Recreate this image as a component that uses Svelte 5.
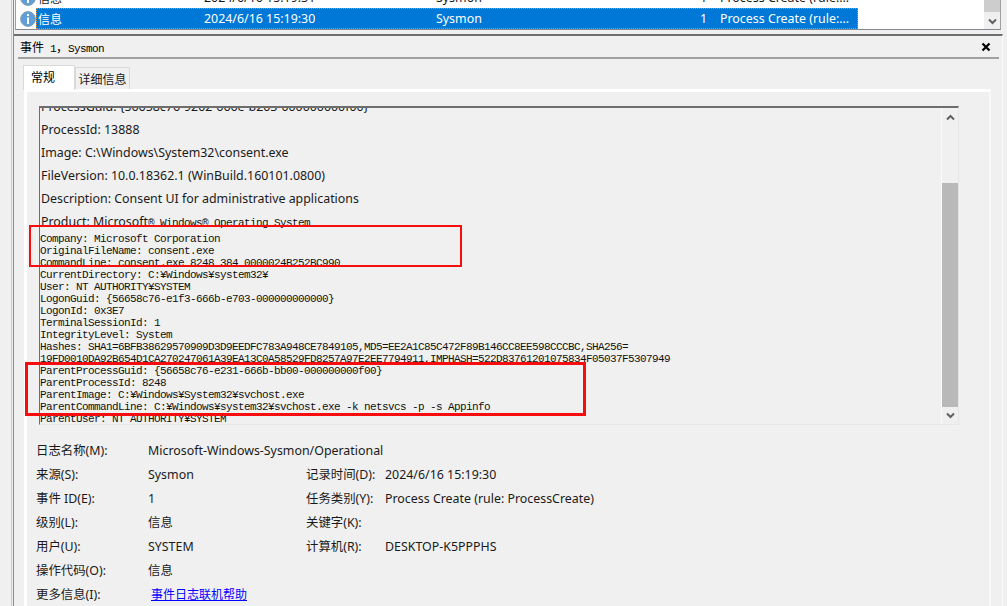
<script>
  const upper = [
    'ProcessGuid: {56658c76-9202-666e-b203-000000000f00}',
    'ProcessId: 13888',
    'Image: C:\\Windows\\System32\\consent.exe',
    'FileVersion: 10.0.18362.1 (WinBuild.160101.0800)',
    'Description: Consent UI for administrative applications'
  ];
  const lower = [
    'Company: Microsoft Corporation',
    'OriginalFileName: consent.exe',
    'CommandLine: consent.exe 8248 384 0000024B252BC990',
    'CurrentDirectory: C:¥Windows¥system32¥',
    'User: NT AUTHORITY¥SYSTEM',
    'LogonGuid: {56658c76-e1f3-666b-e703-000000000000}',
    'LogonId: 0x3E7',
    'TerminalSessionId: 1',
    'IntegrityLevel: System',
    'Hashes: SHA1=6BFB38629570909D3D9EEDFC783A948CE7849105,MD5=EE2A1C85C472F89B146CC8EE598CCCBC,SHA256=',
    '19FD0010DA92B654D1CA270247061A39EA13C0A58529FD8257A97E2EE7794911,IMPHASH=522D83761201075834F05037F5307949',
    'ParentProcessGuid: {56658c76-e231-666b-bb00-000000000f00}',
    'ParentProcessId: 8248',
    'ParentImage: C:¥Windows¥System32¥svchost.exe',
    'ParentCommandLine: C:¥Windows¥system32¥svchost.exe -k netsvcs -p -s Appinfo',
    'ParentUser: NT AUTHORITY¥SYSTEM'
  ];
  const fields = [
    ['日志名称(M):', 'Microsoft-Windows-Sysmon/Operational', '', ''],
    ['来源(S):', 'Sysmon', '记录时间(D):', '2024/6/16 15:19:30'],
    ['事件 ID(E):', '1', '任务类别(Y):', 'Process Create (rule: ProcessCreate)'],
    ['级别(L):', '信息', '关键字(K):', ''],
    ['用户(U):', 'SYSTEM', '计算机(R):', 'DESKTOP-K5PPPHS'],
    ['操作代码(O):', '信息', '', '']
  ];
  const rows = [
    { time: '2024/6/16 15:19:31', selected: false },
    { time: '2024/6/16 15:19:30', selected: true }
  ];
</script>

<div class="screen">
  <div class="list">
    <div class="rows">
      {#each rows as row}
        <div class="row" class:selected={row.selected}>
          <svg class="info" width="16" height="16" viewBox="0 0 16 16">
            <circle cx="8" cy="8" r="7.4" fill="#5f9fd8" stroke="#8a9cae" />
            <rect x="7" y="3" width="2" height="2" fill="#fff" />
            <rect x="7" y="6.5" width="2" height="6.5" fill="#fff" />
          </svg>
          <div class="row-body">
            <span class="cell level">信息</span>
            <span class="cell time">{row.time}</span>
            <span class="cell source">Sysmon</span>
            <span class="cell id">1</span>
            <span class="cell task">Process Create (rule:...</span>
          </div>
        </div>
      {/each}
    </div>
    <div class="list-scroll">
      <div class="list-thumb"></div>
      <svg class="chev" width="9" height="7" viewBox="0 0 9 7"><path d="M1 1.5 4.5 5 8 1.5" fill="none" stroke="#606060" stroke-width="2" /></svg>
    </div>
  </div>

  <div class="details">
    <div class="title">
      <span class="title-text"><span class="cjk">事件</span> 1<span class="cjk">，</span>Sysmon</span>
      <svg width="10" height="10" viewBox="0 0 10 10"><path d="M1.5 1.5 8.5 8.5M8.5 1.5 1.5 8.5" stroke="#000" stroke-width="2.2" /></svg>
    </div>

    <div class="tabs">
      <div class="tab active">常规</div>
      <div class="tab">详细信息</div>
    </div>

    <div class="pane">
      <div class="textbox">
        <div class="text">
          <div class="upper">
            {#each upper as line}
              <div class="prop-line">{line}</div>
            {/each}
            <div class="prop-line product">Product: Microsoft<span class="mono-run">® Windows® Operating System</span></div>
          </div>
          {#each lower as line, i}
            <div class="mono-line" class:cut={i === 2 || i === 10}>{line}</div>
          {/each}
        </div>
        <div class="scroll">
          <svg class="chev" width="9" height="7" viewBox="0 0 9 7"><path d="M1 5.5 4.5 2 8 5.5" fill="none" stroke="#606060" stroke-width="2" /></svg>
          <div class="thumb"></div>
          <svg class="chev" width="9" height="7" viewBox="0 0 9 7"><path d="M1 1.5 4.5 5 8 1.5" fill="none" stroke="#606060" stroke-width="2" /></svg>
        </div>
      </div>

      <div class="fields">
        {#each fields as f}
          <div class="label">{f[0]}</div>
          <div class="value" class:wide={!f[2] && !f[3]}>{f[1]}</div>
          {#if f[2] || f[3]}
            <div class="label">{f[2]}</div>
            <div class="value">{f[3]}</div>
          {/if}
        {/each}
        <div class="label">更多信息(I):</div>
        <div class="value wide"><a class="help" href="#help">事件日志联机帮助</a></div>
      </div>
    </div>
  </div>

  <div class="mark mark-a"></div>
  <div class="mark mark-b"></div>
</div>

<style>
  :global(body) {
    background: #f0f0f0;
  }
  .screen {
    position: relative;
    width: 1007px;
    height: 606px;
    overflow: hidden;
    background: #f0f0f0;
    color: #1a1a1a;
    font-family: "Noto Sans", "Noto Sans CJK SC", sans-serif;
    font-size: 12.4px;
    box-sizing: border-box;
  }
  .screen::before {
    content: "";
    position: absolute;
    left: 11px;
    top: 0;
    width: 1px;
    height: 606px;
    border-left: 1px solid #c8c8c8;
    border-right: 1px solid #8c8c8c;
  }
  .list {
    height: 30px;
    margin: 0 6px 0 15px;
    box-sizing: border-box;
    display: flex;
    background: #fff;
    border-left: 1px solid #a0a0a0;
    border-right: 1px solid #a0a0a0;
    border-bottom: 1px solid #828790;
  }
  .rows {
    flex: 1;
    display: flex;
    flex-direction: column;
    justify-content: flex-end;
    overflow: hidden;
  }
  .row {
    flex: none;
    height: 21px;
    display: flex;
    align-items: center;
    width: 842px;
    padding-left: 4px;
    box-sizing: border-box;
  }
  .info {
    flex: none;
  }
  .row-body {
    flex: 1;
    height: 21px;
    display: flex;
    align-items: center;
    box-sizing: border-box;
    overflow: hidden;
  }
  .cell {
    white-space: nowrap;
  }
  .level {
    width: 168px;
    padding-left: 2px;
    box-sizing: border-box;
    font-size: 12px;
  }
  .time {
    width: 232px;
  }
  .source {
    width: 260px;
  }
  .id {
    width: 11px;
    text-align: right;
  }
  .task {
    margin-left: 13px;
  }
  .row.selected {
    color: #fff;
  }
  .row.selected .row-body {
    background: #0078d7;
    outline: 1px dotted #f08a24;
    outline-offset: -1px;
  }
  .list-scroll {
    flex: none;
    width: 16px;
    background: #f0f0f0;
    display: flex;
    flex-direction: column;
    align-items: center;
  }
  .list-thumb {
    width: 100%;
    height: 12px;
    background: #cdcdcd;
  }
  .list-scroll .chev {
    margin-top: 6px;
  }
  .details {
    margin: 4px 4px 0 13px;
    border-top: 2px solid #6e6e6e;
    border-left: 1px solid #fff;
    border-right: 1px solid #fafafa;
    height: 572px;
    padding: 0 3px 0 4px;
  }
  .title {
    height: 21px;
    display: flex;
    align-items: center;
    justify-content: space-between;
    padding: 0 8px 0 2px;
    border-bottom: 2px solid #a0a0a0;
  }
  .title-text {
    font-family: "Liberation Mono", monospace;
    font-size: 11px;
    letter-spacing: -0.6px;
    color: #000;
  }
  .cjk {
    font-family: "Noto Sans CJK SC", sans-serif;
    font-size: 12px;
    letter-spacing: 0;
  }
  .tabs {
    display: flex;
    align-items: flex-end;
    margin: 6px 0 0 5px;
    height: 24px;
    font-size: 12px;
  }
  .tab {
    width: 55px;
    height: 22px;
    box-sizing: border-box;
    border: 1px solid #d9d9d9;
    border-bottom: 0;
    display: flex;
    align-items: center;
    justify-content: center;
    padding-top: 1px;
  }
  .tab.active {
    width: 52px;
    height: 25px;
    margin-bottom: -1px;
    position: relative;
    background: #fff;
    border-color: #d9d9d9;
    justify-content: flex-start;
    padding: 0 0 3px 7px;
    color: #000;
  }
  .pane {
    margin-left: 6px;
    width: 967px;
    box-sizing: border-box;
    border-top: 3px solid #fff;
    border-left: 3px solid #fff;
    border-right: 2px solid #f8f8f8;
    height: 520px;
    padding: 14px 0 0 12px;
  }
  .textbox {
    width: 920px;
    height: 319px;
    box-sizing: border-box;
    display: flex;
    border-top: 2px solid #6d6d6d;
    border-left: 1px solid #6d6d6d;
    border-right: 1px solid #e6e6e6;
    border-bottom: 1px solid #e6e6e6;
  }
  .text {
    flex: 1;
    overflow: hidden;
  }
  .upper {
    margin-top: -13px;
    height: 138px;
    overflow: hidden;
    padding-left: 1px;
  }
  .prop-line {
    height: 23px;
    line-height: 23px;
    white-space: nowrap;
  }
  .mono-line,
  .mono-run {
    font-family: "Liberation Mono", monospace;
    font-size: 11px;
    letter-spacing: -0.6px;
    color: #111;
    white-space: nowrap;
  }
  .mono-line {
    height: 12px;
    line-height: 12px;
  }
  .mono-line.cut {
    clip-path: inset(0 0 2px 0);
  }
  .scroll {
    flex: none;
    width: 17px;
    box-sizing: border-box;
    border-left: 1px solid #fafafa;
    display: flex;
    flex-direction: column;
    align-items: center;
    justify-content: space-between;
    padding-top: 6px;
  }
  .scroll .chev:last-child {
    margin-bottom: 5px;
  }
  .thumb {
    width: 100%;
    height: 224px;
    margin-top: 57px;
    background: #b9b9b9;
  }
  .fields {
    display: grid;
    grid-template-columns: 112px 158px 79px 1fr;
    grid-auto-rows: 24px;
    align-items: center;
    margin: 13px 0 0 -3px;
  }
  .label {
    white-space: nowrap;
  }
  .value {
    white-space: nowrap;
  }
  .value.wide {
    grid-column: 2 / 5;
  }
  .help {
    color: #0000ff;
    margin-left: 3px;
    font-size: 12px;
  }
  .mark {
    position: absolute;
    box-sizing: border-box;
    border: 2px solid #f70d0d;
    pointer-events: none;
  }
  .mark-a {
    left: 29px;
    top: 225px;
    width: 433px;
    height: 42px;
  }
  .mark-b {
    left: 25px;
    top: 362px;
    width: 561px;
    height: 54px;
    border-width: 3px;
  }
</style>
